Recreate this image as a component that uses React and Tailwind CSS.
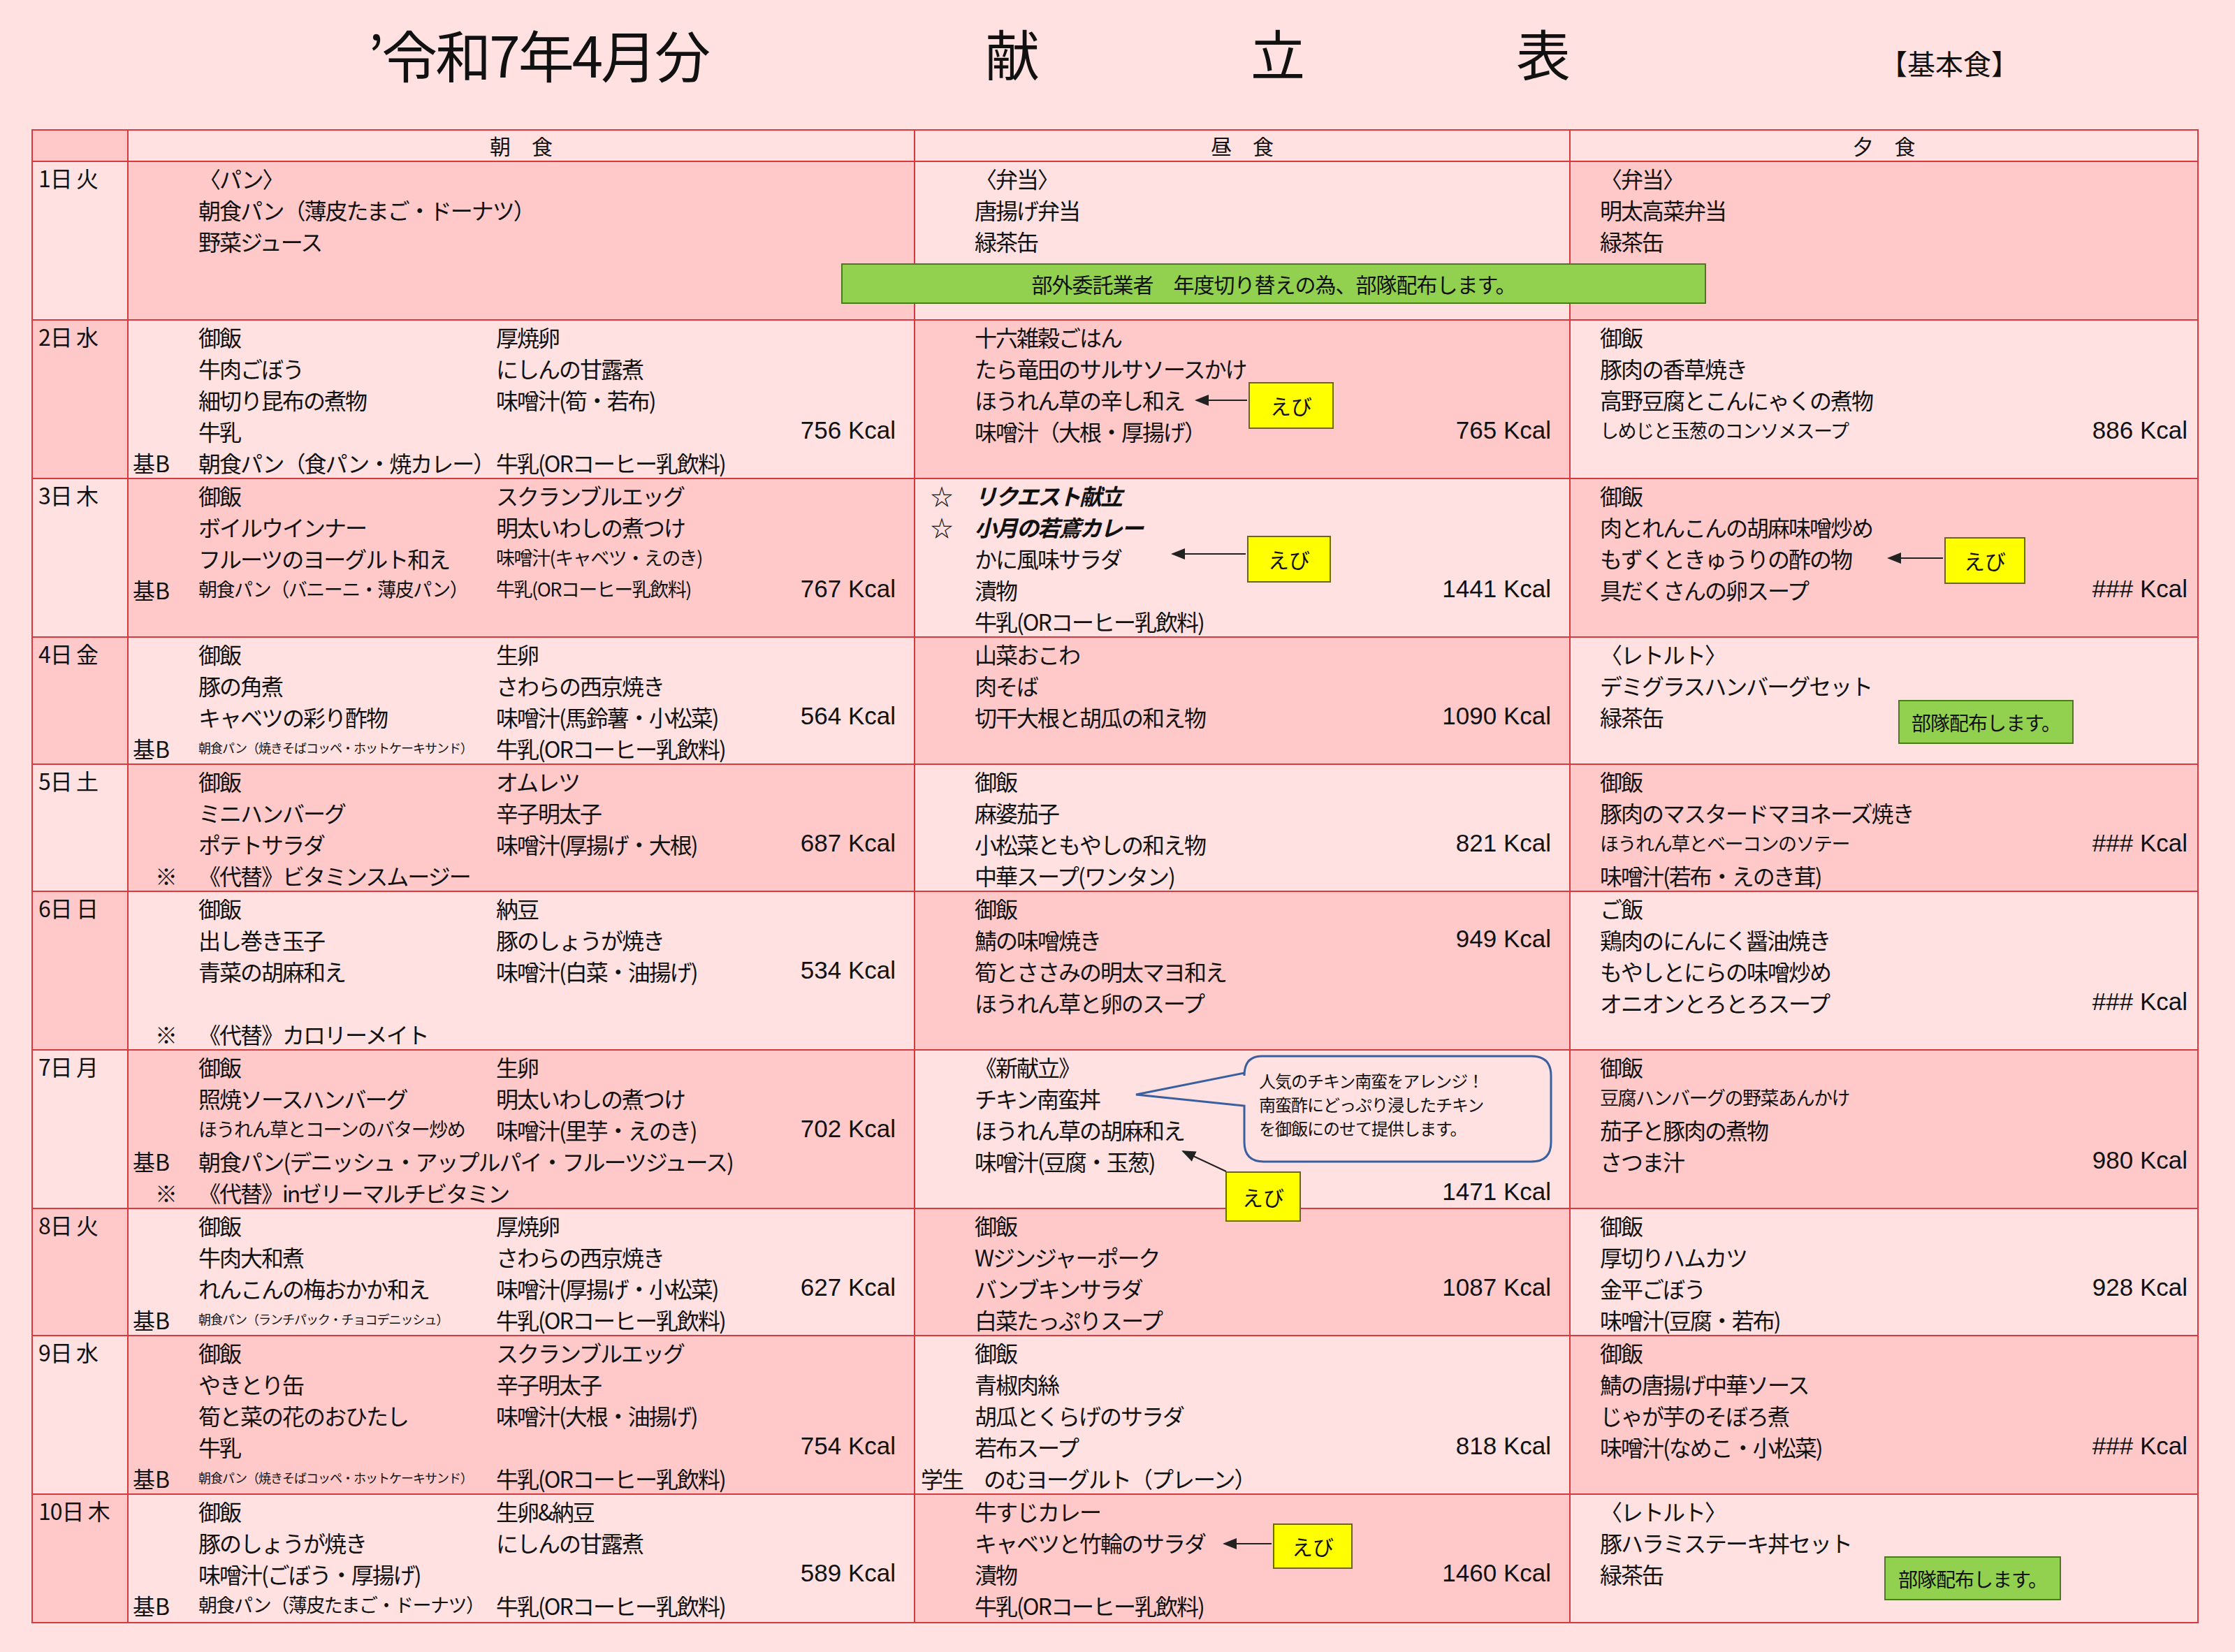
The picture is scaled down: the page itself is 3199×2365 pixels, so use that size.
import React from "react";

const LIGHT = "bg-[#ffe1e1]";
const DARK = "bg-[#ffc9c9]";

// t: text, s: size ("s" small, "xs" tiny)
const T = ({ t, s }) => {
  if (!t) return null;
  const size =
    s === "xs" ? "text-[18px] tracking-[-1px]" : s === "s" ? "text-[27px] tracking-[-1.5px]" : "text-[32px] tracking-[-2px]";
  return <span className={`${size} whitespace-nowrap`}>{t}</span>;
};

const K = ({ k, pr }) => (
  <div className={`${pr} whitespace-nowrap text-[35px]`} style={{ fontFamily: '"Liberation Sans", sans-serif' }}>
    {k}
  </div>
);

const rows = [
  {
    day: "1日 火", n: 5,
    b: [["", "〈パン〉"], ["", "朝食パン（薄皮たまご・ドーナツ）"], ["", "野菜ジュース"]],
    l: [["", "〈弁当〉"], ["", "唐揚げ弁当"], ["", "緑茶缶"]],
    d: [["", "〈弁当〉"], ["", "明太高菜弁当"], ["", "緑茶缶"]],
  },
  {
    day: "2日 水", n: 5,
    b: [["", "御飯", "厚焼卵"], ["", "牛肉ごぼう", "にしんの甘露煮"], ["", "細切り昆布の煮物", "味噌汁(筍・若布)"], ["", "牛乳", "", "756 Kcal"], ["基B", "朝食パン（食パン・焼カレー）", "牛乳(ORコーヒー乳飲料)"]],
    l: [["", "十六雑穀ごはん"], ["", "たら竜田のサルサソースかけ"], ["", "ほうれん草の辛し和え"], ["", "味噌汁（大根・厚揚げ）", "765 Kcal"]],
    d: [["", "御飯"], ["", "豚肉の香草焼き"], ["", "高野豆腐とこんにゃくの煮物"], ["", "しめじと玉葱のコンソメスープ", "886 Kcal", "s"]],
  },
  {
    day: "3日 木", n: 5,
    b: [["", "御飯", "スクランブルエッグ"], ["", "ボイルウインナー", "明太いわしの煮つけ"], ["", "フルーツのヨーグルト和え", "味噌汁(キャベツ・えのき)", "", "s2"], ["基B", "朝食パン（バニーニ・薄皮パン）", "牛乳(ORコーヒー乳飲料)", "767 Kcal", "s"]],
    l: [["☆", "リクエスト献立", "", "bi"], ["☆", "小月の若鳶カレー", "", "bi"], ["", "かに風味サラダ"], ["", "漬物", "1441 Kcal"], ["", "牛乳(ORコーヒー乳飲料)"]],
    d: [["", "御飯"], ["", "肉とれんこんの胡麻味噌炒め"], ["", "もずくときゅうりの酢の物"], ["", "具だくさんの卵スープ", "### Kcal"]],
  },
  {
    day: "4日 金", n: 4,
    b: [["", "御飯", "生卵"], ["", "豚の角煮", "さわらの西京焼き"], ["", "キャベツの彩り酢物", "味噌汁(馬鈴薯・小松菜)", "564 Kcal"], ["基B", "朝食パン（焼きそばコッペ・ホットケーキサンド）", "牛乳(ORコーヒー乳飲料)", "", "xs"]],
    l: [["", "山菜おこわ"], ["", "肉そば"], ["", "切干大根と胡瓜の和え物", "1090 Kcal"]],
    d: [["", "〈レトルト〉"], ["", "デミグラスハンバーグセット"], ["", "緑茶缶"]],
  },
  {
    day: "5日 土", n: 4,
    b: [["", "御飯", "オムレツ"], ["", "ミニハンバーグ", "辛子明太子"], ["", "ポテトサラダ", "味噌汁(厚揚げ・大根)", "687 Kcal"], ["　※", "《代替》ビタミンスムージー"]],
    l: [["", "御飯"], ["", "麻婆茄子"], ["", "小松菜ともやしの和え物", "821 Kcal"], ["", "中華スープ(ワンタン)"]],
    d: [["", "御飯"], ["", "豚肉のマスタードマヨネーズ焼き"], ["", "ほうれん草とベーコンのソテー", "### Kcal", "s"], ["", "味噌汁(若布・えのき茸)"]],
  },
  {
    day: "6日 日", n: 5,
    b: [["", "御飯", "納豆"], ["", "出し巻き玉子", "豚のしょうが焼き"], ["", "青菜の胡麻和え", "味噌汁(白菜・油揚げ)", "534 Kcal"], [""], ["　※", "《代替》カロリーメイト"]],
    l: [["", "御飯"], ["", "鯖の味噌焼き", "949 Kcal"], ["", "筍とささみの明太マヨ和え"], ["", "ほうれん草と卵のスープ"]],
    d: [["", "ご飯"], ["", "鶏肉のにんにく醤油焼き"], ["", "もやしとにらの味噌炒め"], ["", "オニオンとろとろスープ", "### Kcal"]],
  },
  {
    day: "7日 月", n: 5,
    b: [["", "御飯", "生卵"], ["", "照焼ソースハンバーグ", "明太いわしの煮つけ"], ["", "ほうれん草とコーンのバター炒め", "味噌汁(里芋・えのき)", "702 Kcal", "s1"], ["基B", "朝食パン(デニッシュ・アップルパイ・フルーツジュース)"], ["　※", "《代替》inゼリーマルチビタミン"]],
    l: [["", "《新献立》"], ["", "チキン南蛮丼"], ["", "ほうれん草の胡麻和え"], ["", "味噌汁(豆腐・玉葱)"], ["", "", "1471 Kcal"]],
    d: [["", "御飯"], ["", "豆腐ハンバーグの野菜あんかけ", "", "s"], ["", "茄子と豚肉の煮物"], ["", "さつま汁", "980 Kcal"]],
  },
  {
    day: "8日 火", n: 4,
    b: [["", "御飯", "厚焼卵"], ["", "牛肉大和煮", "さわらの西京焼き"], ["", "れんこんの梅おかか和え", "味噌汁(厚揚げ・小松菜)", "627 Kcal"], ["基B", "朝食パン（ランチパック・チョコデニッシュ）", "牛乳(ORコーヒー乳飲料)", "", "xs"]],
    l: [["", "御飯"], ["", "Wジンジャーポーク"], ["", "バンブキンサラダ", "1087 Kcal"], ["", "白菜たっぷりスープ"]],
    d: [["", "御飯"], ["", "厚切りハムカツ"], ["", "金平ごぼう", "928 Kcal"], ["", "味噌汁(豆腐・若布)"]],
  },
  {
    day: "9日 水", n: 5,
    b: [["", "御飯", "スクランブルエッグ"], ["", "やきとり缶", "辛子明太子"], ["", "筍と菜の花のおひたし", "味噌汁(大根・油揚げ)"], ["", "牛乳", "", "754 Kcal"], ["基B", "朝食パン（焼きそばコッペ・ホットケーキサンド）", "牛乳(ORコーヒー乳飲料)", "", "xs"]],
    l: [["", "御飯"], ["", "青椒肉絲"], ["", "胡瓜とくらげのサラダ"], ["", "若布スープ", "818 Kcal"], ["学生", "のむヨーグルト（プレーン）", "", "stu"]],
    d: [["", "御飯"], ["", "鯖の唐揚げ中華ソース"], ["", "じゃが芋のそぼろ煮"], ["", "味噌汁(なめこ・小松菜)", "### Kcal"]],
  },
  {
    day: "10日 木", n: 4,
    b: [["", "御飯", "生卵&納豆"], ["", "豚のしょうが焼き", "にしんの甘露煮"], ["", "味噌汁(ごぼう・厚揚げ)", "", "589 Kcal"], ["基B", "朝食パン（薄皮たまご・ドーナツ）", "牛乳(ORコーヒー乳飲料)", "", "s1"]],
    l: [["", "牛すじカレー"], ["", "キャベツと竹輪のサラダ"], ["", "漬物", "1460 Kcal"], ["", "牛乳(ORコーヒー乳飲料)"]],
    d: [["", "〈レトルト〉"], ["", "豚ハラミステーキ丼セット"], ["", "緑茶缶"]],
  },
];

const BLine = ({ ln }) => {
  const [l, a, b, k, s] = ln;
  const sa = s === "xs" ? "xs" : s === "s" || s === "s1" ? "s" : undefined;
  const sb = s === "s" || s === "s2" ? "s" : undefined;
  return (
    <div className="flex h-[45px] items-center">
      <div className="w-[100px] shrink-0 pl-[6px] text-[32px] whitespace-nowrap">{l}</div>
      <div className="w-[426px] shrink-0 overflow-visible"><T t={a} s={sa} /></div>
      <div className="flex-1"><T t={b} s={sb} /></div>
      <K k={k} pr="pr-[26px]" />
    </div>
  );
};

const SLine = ({ ln, pr, pw }) => {
  const [p, a, k, s] = ln;
  if (s === "stu")
    return (
      <div className="flex h-[45px] items-center pl-[8px] text-[32px] tracking-[-2px] whitespace-nowrap">
        {p}　{a}
      </div>
    );
  return (
    <div className="flex h-[45px] items-center">
      <div className={`${pw} shrink-0 pl-[22px] text-[32px]`}>{p}</div>
      <div className={`flex-1 ${s === "bi" ? "font-bold italic" : ""}`}>
        <T t={a} s={s === "s" ? "s" : undefined} />
      </div>
      <K k={k} pr={pr} />
    </div>
  );
};

const bg = (r, c) => ((r + c) % 2 === 0 ? DARK : LIGHT);

const Ebi = ({ cls }) => (
  <div className={`absolute flex items-center justify-center border-2 border-[#6b6b00] bg-[#ffff00] text-[30px] ${cls}`}>えび</div>
);

const Butai = ({ cls }) => (
  <div className={`absolute flex items-center justify-center border-2 border-[#4d7a1f] bg-[#92d050] text-[28px] tracking-[-1px] ${cls}`}>部隊配布します。</div>
);

export default function App() {
  return (
    <div
      className="relative h-[2365px] w-[3199px] bg-[#ffe1e1] text-[#111]"
      style={{ fontFamily: '"Noto Sans CJK JP", "Noto Sans", sans-serif' }}
    >
      <div className="relative h-[185px]">
        <div className="absolute left-[527px] top-[36px] text-[80px] leading-none tracking-[-3px]">’令和7年4月分</div>
        <div className="absolute left-[1410px] top-[36px] text-[78px] leading-none">献</div>
        <div className="absolute left-[1790px] top-[36px] text-[78px] leading-none">立</div>
        <div className="absolute left-[2170px] top-[36px] text-[78px] leading-none">表</div>
        <div className="absolute left-[2690px] top-[70px] text-[40px] leading-none">【基本食】</div>
      </div>

      <div className="ml-[45px] w-[3102px] border-2 border-[#d63a3f]">
        <div className="flex h-[45px] border-b-2 border-[#d63a3f] text-[30px]">
          <div className={`w-[137px] border-r-2 border-[#d63a3f] ${DARK}`} />
          <div className={`flex w-[1126px] items-center justify-center border-r-2 border-[#d63a3f] ${LIGHT}`}>朝　食</div>
          <div className={`flex w-[938px] items-center justify-center border-r-2 border-[#d63a3f] ${LIGHT}`}>昼　食</div>
          <div className={`flex flex-1 items-center justify-center ${LIGHT}`}>夕　食</div>
        </div>
        {rows.map((r, i) => (
          <div
            key={r.day}
            className={`flex ${r.n === 5 ? "h-[227px]" : "h-[182px]"} ${i < rows.length - 1 ? "border-b-2 border-[#d63a3f]" : ""}`}
          >
            <div className={`w-[137px] shrink-0 border-r-2 border-[#d63a3f] pl-[8px] text-[32px] leading-[45px] tracking-[-1px] ${bg(i + 1, 0)}`}>{r.day}</div>
            <div className={`w-[1126px] shrink-0 border-r-2 border-[#d63a3f] ${bg(i + 1, 1)}`}>
              {r.b.map((ln, j) => <BLine key={j} ln={ln} />)}
            </div>
            <div className={`w-[938px] shrink-0 border-r-2 border-[#d63a3f] ${bg(i + 1, 2)}`}>
              {r.l.map((ln, j) => <SLine key={j} ln={ln} pr="pr-[26px]" pw="w-[85px]" />)}
            </div>
            <div className={`flex-1 ${bg(i + 1, 3)}`}>
              {r.d.map((ln, j) => <SLine key={j} ln={ln} pr="pr-[14px]" pw="w-[42px]" />)}
            </div>
          </div>
        ))}
      </div>

      {/* overlays */}
      <div className="absolute left-[1204px] top-[377px] flex h-[58px] w-[1238px] items-center justify-center border-2 border-[#4d7a1f] bg-[#92d050] text-[30px] tracking-[-1px]">
        部外委託業者　年度切り替えの為、部隊配布します。
      </div>
      <Ebi cls="left-[1787px] top-[547px] h-[67px] w-[122px]" />
      <Ebi cls="left-[1785px] top-[767px] h-[67px] w-[120px]" />
      <Ebi cls="left-[2783px] top-[769px] h-[67px] w-[116px]" />
      <Ebi cls="left-[1754px] top-[1677px] h-[72px] w-[108px]" />
      <Ebi cls="left-[1822px] top-[2181px] h-[65px] w-[114px]" />
      <Butai cls="left-[2717px] top-[1002px] h-[63px] w-[251px]" />
      <Butai cls="left-[2697px] top-[2228px] h-[63px] w-[253px]" />

      <svg className="absolute left-0 top-0" width="3199" height="2365" pointerEvents="none">
        <defs>
          <marker id="ah" markerWidth="10" markerHeight="8" refX="9" refY="4" orient="auto">
            <path d="M0,0 L10,4 L0,8 Z" fill="#222" />
          </marker>
        </defs>
        <g stroke="#222" strokeWidth="2" markerEnd="url(#ah)">
          <line x1="1785" y1="573" x2="1712" y2="573" />
          <line x1="1783" y1="793" x2="1678" y2="793" />
          <line x1="2781" y1="799" x2="2703" y2="799" />
          <line x1="1755" y1="1677" x2="1693" y2="1648" />
          <line x1="1820" y1="2210" x2="1752" y2="2210" />
        </g>
        <path
          d="M1806,1512 H2192 Q2220,1512 2220,1540 V1635 Q2220,1663 2192,1663 H1809 Q1781,1663 1781,1635 V1583 L1626,1567 L1781,1536 V1540 Q1781,1512 1806,1512 Z"
          fill="#ffe1e1"
          stroke="#3a5f9e"
          strokeWidth="3"
        />
      </svg>
      <div className="absolute left-[1802px] top-[1530px] text-[24px] leading-[34px] tracking-[-1px]">
        人気のチキン南蛮をアレンジ！<br />南蛮酢にどっぷり浸したチキン<br />を御飯にのせて提供します。
      </div>
    </div>
  );
}
